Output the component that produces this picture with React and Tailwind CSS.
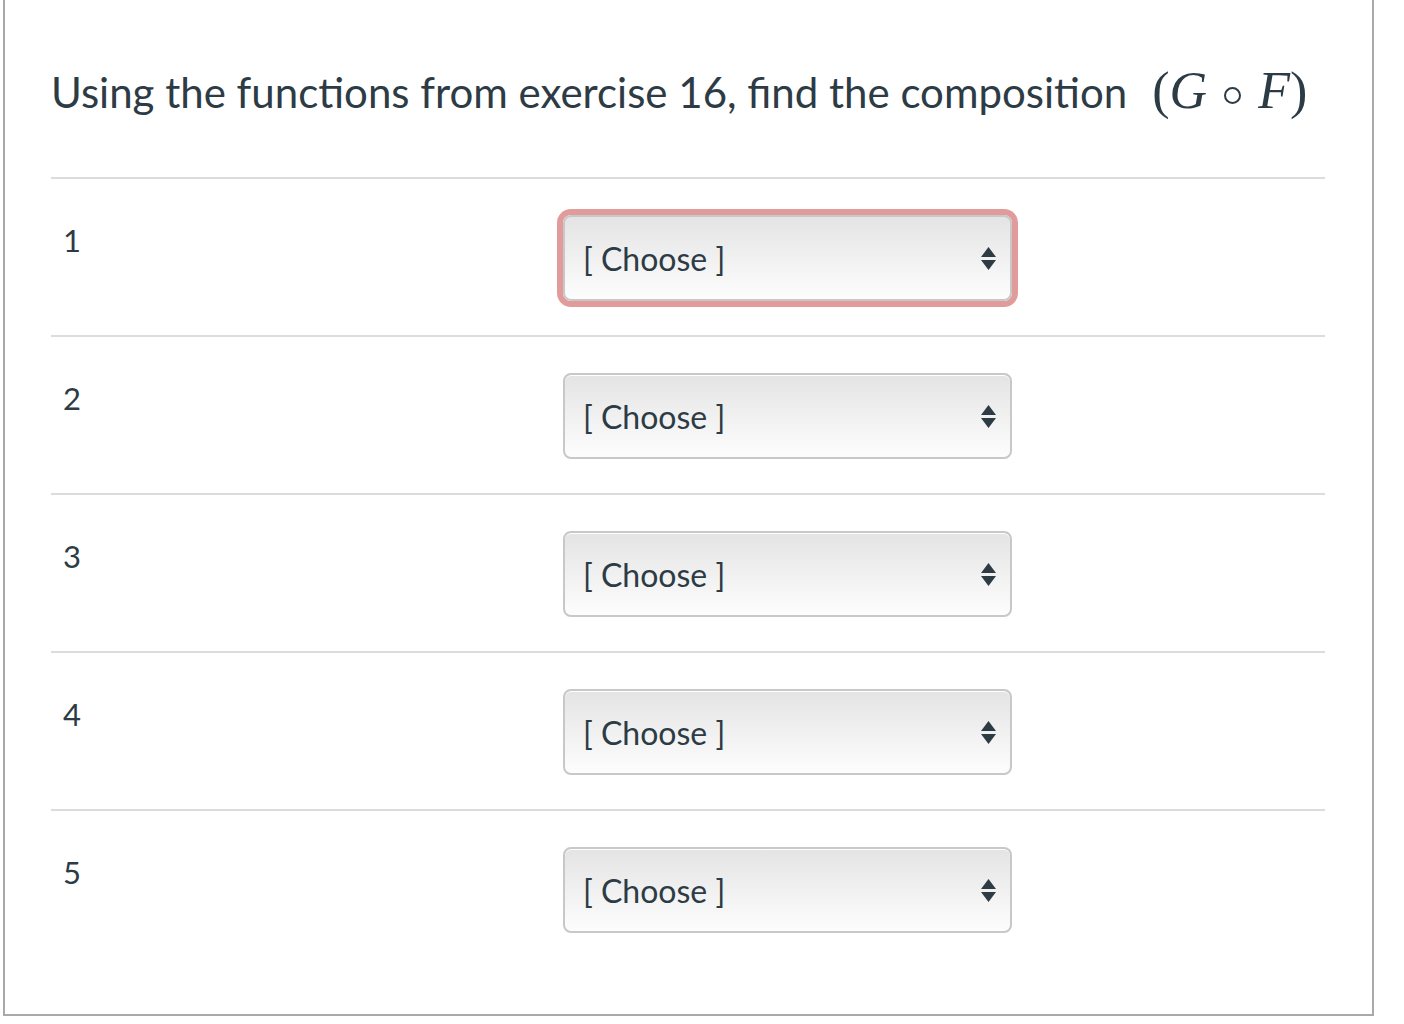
import React from 'react';

const font = { fontFamily: 'Lato, "Liberation Sans", sans-serif' };

function Arrows() {
  return (
    <svg width="15" height="26" viewBox="0 0 15 26" className="shrink-0">
      <path d="M7.5 1 L15 11 L0 11 Z" fill="#2d3b45" />
      <path d="M0 14 L15 14 L7.5 24 Z" fill="#2d3b45" />
    </svg>
  );
}

function Select({ flagged }) {
  return (
    <div
      className={
        'w-[449px] h-[86px] rounded-[8px] border-2 border-[#c8c8c8] bg-gradient-to-b from-[#e4e4e4] to-[#fdfdfd] flex items-center justify-between pl-[18px] pr-[14px] pt-[2px] ' +
        (flagged ? 'shadow-[0_0_0_6px_#e29b9b]' : 'shadow-[inset_0_1px_0_#fff]')
      }
    >
      <span className="text-[32px] text-[#2d3b45] leading-none">[ Choose ]</span>
      <Arrows />
    </div>
  );
}

export default function App() {
  const rows = [1, 2, 3, 4, 5];
  return (
    <div className="w-[1404px] h-[1024px] bg-white" style={font}>
      <div className="ml-[3px] w-[1371px] h-[1016px] border-l-2 border-r-2 border-b-2 border-[#a9a9a9] pl-[46px] pr-[47px]">
        {/* Question text */}
        <div className="pt-[61px] pb-[55px] flex items-baseline text-[#2d3b45]">
          <span className="text-[42px] leading-[60px] whitespace-nowrap">
            Using the functions from exercise 16, find the composition
          </span>
          <span
            className="ml-[25px] text-[52px] leading-[60px] whitespace-nowrap"
            style={{ fontFamily: '"Liberation Serif", "DejaVu Serif", serif' }}
          >
            (<i>G</i>
            <span className="inline-block w-[17px] h-[17px] rounded-full border-2 border-[#2d3b45] mx-[17px] relative top-[-4px]" />
            <i>F</i>)
          </span>
        </div>

        {/* Matching rows */}
        {rows.map((n) => (
          <div key={n} className="border-t-2 border-[#dcdcdc] h-[158px] flex">
            <div className="w-[512px] pl-[12px] pt-[41px] text-[31px] text-[#2d3b45] leading-[40px]">
              {n}
            </div>
            <div className="pt-[36px]">
              <Select flagged={n === 1} />
            </div>
          </div>
        ))}
      </div>
    </div>
  );
}
